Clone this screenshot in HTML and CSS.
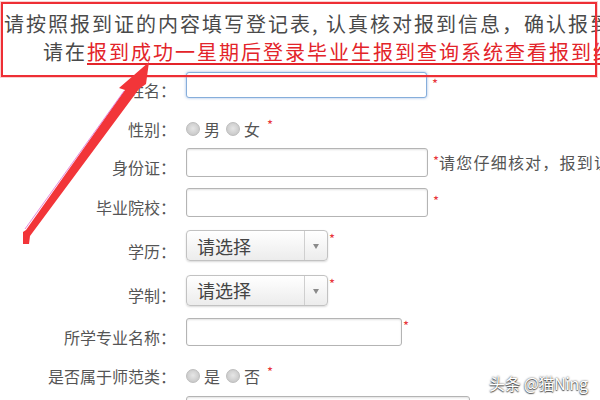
FILE: index.html
```html
<!DOCTYPE html>
<html lang="zh-CN">
<head>
<meta charset="UTF-8" />
<meta name="viewport" content="width=device-width, initial-scale=1" />
<title>毕业生报到登记</title>
<link rel="stylesheet" href="styles.css">
</head>
<body>
  <div class="notice">
    <p>请按照报到证的内容填写登记表, 认真核对报到信息，确认报到证上的信息无误</p>
    <p class="second">请在<a href="#">报到成功一星期后登录毕业生报到查询系统查看报到结果</a></p>
  </div>

  <form class="register">
    <div class="row row-name">
      <label>姓名：</label>
      <input type="text" class="text focus" />
      <span class="req">*</span>
    </div>
    <div class="row row-gender">
      <label>性别：</label>
      <div class="choices">
        <input type="radio" name="sex" /><span>男</span>
        <input type="radio" name="sex" /><span>女</span>
        <span class="req">*</span>
      </div>
    </div>
    <div class="row row-id">
      <label>身份证：</label>
      <input type="text" class="text" />
      <span class="req">*</span><span class="hint">请您仔细核对，报到证上的身份证号码</span>
    </div>
    <div class="row row-school">
      <label>毕业院校：</label>
      <input type="text" class="text" />
      <span class="req">*</span>
    </div>
    <div class="row row-edu">
      <label>学历：</label>
      <div class="select"><span>请选择</span><i class="caret"></i></div>
      <span class="req tight">*</span>
    </div>
    <div class="row row-years">
      <label>学制：</label>
      <div class="select"><span>请选择</span><i class="caret"></i></div>
      <span class="req tight">*</span>
    </div>
    <div class="row row-major">
      <label>所学专业名称：</label>
      <input type="text" class="text short" />
      <span class="req tight">*</span>
    </div>
    <div class="row row-normal">
      <label>是否属于师范类：</label>
      <div class="choices">
        <input type="radio" name="normal" /><span>是</span>
        <input type="radio" name="normal" /><span>否</span>
        <span class="req">*</span>
      </div>
    </div>
    <div class="row row-last">
      <label></label>
      <input type="text" class="text wide" />
    </div>
  </form>

  <!-- annotation drawn over the screenshot -->
  <div class="mark-box"></div>
  <svg class="mark-arrow" viewBox="0 0 600 400" width="600" height="400">
    <polygon points="149,62 146,84 139,89 30,236 29,244 23,244 23,232 26,230 125,90 119,88" fill="#f23539" />
    <line x1="25" y1="229" x2="124" y2="91" stroke="#d640c8" stroke-width="1" opacity="0.6" />
  </svg>

  <div class="watermark">头条 @猫Ning</div>
</body>
</html>
```

FILE: styles.css
```css
html, body {
  height: 100%;
  overflow: hidden;
}
body {
  margin: 0;
  background: #fff;
  color: #555;
  font-family: "Noto Sans CJK SC", "Noto Sans", sans-serif;
  position: relative;
}
.notice {
  padding-top: 10px;
  overflow: hidden;
  white-space: nowrap;
  font-size: 20px;
  letter-spacing: 2px;
}
.notice p {
  margin: 0;
  height: 28px;
  line-height: 28px;
  padding-left: 4px;
  color: #4a4a4a;
}
.notice p.second {
  padding-left: 43px;
}
.notice a {
  color: #e3242a;
  text-decoration: underline;
  text-underline-offset: 3px;
}

.register {
  display: flex;
  flex-direction: column;
}
.row {
  display: flex;
  align-items: center;
  white-space: nowrap;
  font-size: 16px;
}
.row-name { height: 38px; }
.row-gender { height: 39px; }
.row-id { height: 38px; }
.row-school { height: 42px; }
.row-edu { height: 45px; }
.row-years { height: 44px; }
.row-major { height: 40px; }
.row-normal { height: 38px; }
.row-last { height: 40px; align-items: flex-start; padding-top: 6px; }

.row label {
  width: 176px;
  margin-right: 10px;
  text-align: right;
  padding-top: 10px;
  line-height: 20px;
  color: #555;
  flex-shrink: 0;
}
.row-last label {
  padding-top: 0;
}

input.text {
  box-sizing: border-box;
  flex-shrink: 0;
  width: 242px;
  height: 29px;
  margin: 0;
  border: 1px solid #b4b4b4;
  border-radius: 3px;
  background: #fff;
  box-shadow: inset 0 1px 2px rgba(0, 0, 0, 0.12);
}
input.text.focus {
  width: 241px;
  height: 26px;
  border-color: #86aedb;
  box-shadow: 0 0 3px rgba(90, 140, 210, 0.6);
}
input.text.short {
  width: 216px;
  height: 28px;
}
input.text.wide {
  width: 284px;
}

.req {
  color: #e8343a;
  font-size: 13px;
  margin-left: 5px;
  padding-bottom: 4px;
  flex-shrink: 0;
}
.req.tight {
  margin-left: 1px;
  padding-bottom: 14px;
}
.hint {
  color: #555;
  font-size: 16px;
  letter-spacing: 1.2px;
}

.choices {
  display: flex;
  align-items: center;
  padding-top: 10px;
  line-height: 20px;
}
.choices input[type="radio"] {
  appearance: none;
  width: 14px;
  height: 14px;
  margin: 0 4px 0 0;
  border: 1px solid #bdbdbd;
  border-radius: 50%;
  box-sizing: border-box;
  background: radial-gradient(circle at 50% 45%, #e6e6e6 0, #cfcfcf 60%, #c2c2c2 100%);
}
.choices span {
  margin-right: 6px;
}
.choices .req {
  margin-left: 1px;
  padding-bottom: 8px;
}

.select {
  box-sizing: border-box;
  flex-shrink: 0;
  width: 142px;
  height: 31px;
  display: flex;
  align-items: center;
  border: 1px solid #c2c2c2;
  border-radius: 4px;
  background: linear-gradient(#ffffff, #ececec);
  box-shadow: 0 1px 2px rgba(0, 0, 0, 0.15);
  font-size: 18px;
  color: #444;
}
.select span {
  flex: 1;
  padding-left: 10px;
}
.select .caret {
  width: 22px;
  height: 100%;
  border-left: 1px solid #cfcfcf;
  position: relative;
}
.select .caret::after {
  content: "";
  position: absolute;
  left: 8px;
  top: 13px;
  border-left: 3px solid transparent;
  border-right: 3px solid transparent;
  border-top: 5px solid #8a8a8a;
}

.mark-box {
  position: absolute;
  left: 1px;
  top: 2px;
  width: 592px;
  height: 71px;
  border: 2px solid #ee2e34;
  box-shadow: 0 0 0 1px rgba(240, 120, 120, 0.35);
}
.mark-arrow {
  position: absolute;
  left: 0;
  top: 0;
}
.watermark {
  position: absolute;
  left: 489px;
  top: 371px;
  font-size: 16px;
  color: #fff;
  text-shadow: 0 0 2px rgba(0, 0, 0, 0.8), 0 1px 1px rgba(0, 0, 0, 0.6);
  letter-spacing: -0.3px;
}
```
